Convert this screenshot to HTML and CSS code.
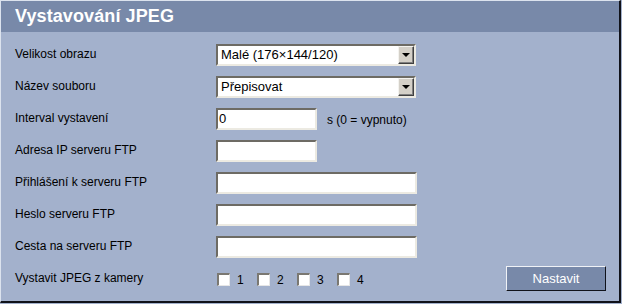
FILE: index.html
```html
<!DOCTYPE html>
<html lang="cs">
<head>
<meta charset="utf-8">
<title>Vystavování JPEG</title>
<link rel="stylesheet" href="styles.css">
</head>
<body>
<div class="panel">
  <div class="header">Vystavování JPEG</div>
  <div class="form">
    <div class="row">
      <div class="label">Velikost obrazu</div>
      <div class="select"><span class="sel-text">Malé (176×144/120)</span><span class="sel-btn"><span class="tri"></span></span></div>
    </div>
    <div class="row">
      <div class="label">Název souboru</div>
      <div class="select"><span class="sel-text">Přepisovat</span><span class="sel-btn"><span class="tri"></span></span></div>
    </div>
    <div class="row">
      <div class="label">Interval vystavení</div>
      <div class="input short">0</div>
      <div class="unit">s (0 = vypnuto)</div>
    </div>
    <div class="row">
      <div class="label">Adresa IP serveru FTP</div>
      <div class="input short"></div>
    </div>
    <div class="row">
      <div class="label">Přihlášení k serveru FTP</div>
      <div class="input long"></div>
    </div>
    <div class="row">
      <div class="label">Heslo serveru FTP</div>
      <div class="input long"></div>
    </div>
    <div class="row">
      <div class="label">Cesta na serveru FTP</div>
      <div class="input long"></div>
    </div>
    <div class="row last">
      <div class="label">Vystavit JPEG z kamery</div>
      <div class="checks">
        <div class="check"><span class="box"></span><span class="num">1</span></div>
        <div class="check"><span class="box"></span><span class="num">2</span></div>
        <div class="check"><span class="box"></span><span class="num">3</span></div>
        <div class="check"><span class="box"></span><span class="num">4</span></div>
      </div>
      <div class="button">Nastavit</div>
    </div>
  </div>
</div>
</body>
</html>
```

FILE: styles.css
```css
html, body {
  margin: 0;
  padding: 0;
}
body {
  background: #a3b1cc;
  font-family: "Liberation Sans", Arial, sans-serif;
  font-size: 12px;
  color: #000;
  width: 622px;
  height: 304px;
}
.panel {
  width: 618px;
  height: 300px;
  border-top: 1px solid #dce3ee;
  border-left: 1px solid #dce3ee;
  border-right: 2px solid #10121a;
  border-bottom: 2px solid #10121a;
  background: #a3b1cc;
  display: flex;
  flex-direction: column;
}
.header {
  height: 31px;
  background: #7889a9;
  color: #fff;
  font-weight: bold;
  font-size: 18px;
  line-height: 31px;
  padding-left: 14px;
  letter-spacing: 0.1px;
  flex: none;
}
.form {
  padding: 6px 13px 0 14px;
  display: flex;
  flex-direction: column;
}
.row {
  height: 32px;
  display: flex;
  align-items: center;
}
.label {
  width: 201px;
  flex: none;
  line-height: 14px;
}
.select {
  box-sizing: border-box;
  width: 200px;
  height: 22px;
  background: #fff;
  border-top: 2px solid #6d6b64;
  border-left: 2px solid #6d6b64;
  border-right: 2px solid #eceae2;
  border-bottom: 2px solid #eceae2;
  display: flex;
  align-items: stretch;
  margin-top: 1px;
}
.sel-text {
  flex: 1;
  padding-left: 3px;
  font-size: 13px;
  line-height: 18px;
}
.sel-btn {
  box-sizing: border-box;
  width: 16px;
  height: 18px;
  background: #d4d0c8;
  border-top: 1px solid #f4f3ef;
  border-left: 1px solid #f4f3ef;
  border-right: 1px solid #404040;
  border-bottom: 1px solid #404040;
  box-shadow: inset -1px -1px 0 #808080;
  display: flex;
  align-items: center;
  justify-content: center;
}
.tri {
  width: 0;
  height: 0;
  border-left: 4px solid transparent;
  border-right: 4px solid transparent;
  border-top: 4px solid #000;
  margin-top: 1px;
}
.input {
  box-sizing: border-box;
  height: 22px;
  background: #fff;
  border-top: 2px solid #6d6b64;
  border-left: 2px solid #6d6b64;
  border-right: 2px solid #eceae2;
  border-bottom: 2px solid #eceae2;
  padding-left: 1px;
  font-size: 13px;
  line-height: 18px;
  margin-top: 1px;
}
.input.short {
  width: 101px;
}
.input.long {
  width: 201px;
}
.unit {
  margin-left: 10px;
  margin-top: 3px;
}
.row.last {
  justify-content: flex-start;
}
.checks {
  display: flex;
  flex: 1;
  margin-top: 3px;
}
.check {
  width: 40px;
  display: flex;
  align-items: center;
}
.box {
  box-sizing: border-box;
  width: 13px;
  height: 13px;
  background: #fff;
  border-top: 2px solid #7a7872;
  border-left: 2px solid #7a7872;
  border-right: 1px solid #e6e6e6;
  border-bottom: 1px solid #e6e6e6;
  margin-left: 1px;
}
.num {
  margin-left: 7px;
}
.button {
  box-sizing: border-box;
  width: 100px;
  height: 25px;
  background: #7889a9;
  color: #fff;
  border-top: 1px solid #f0f2f6;
  border-left: 1px solid #f0f2f6;
  border-right: 1px solid #10121a;
  border-bottom: 1px solid #10121a;
  display: flex;
  align-items: center;
  justify-content: center;
  font-size: 13px;
}
```
